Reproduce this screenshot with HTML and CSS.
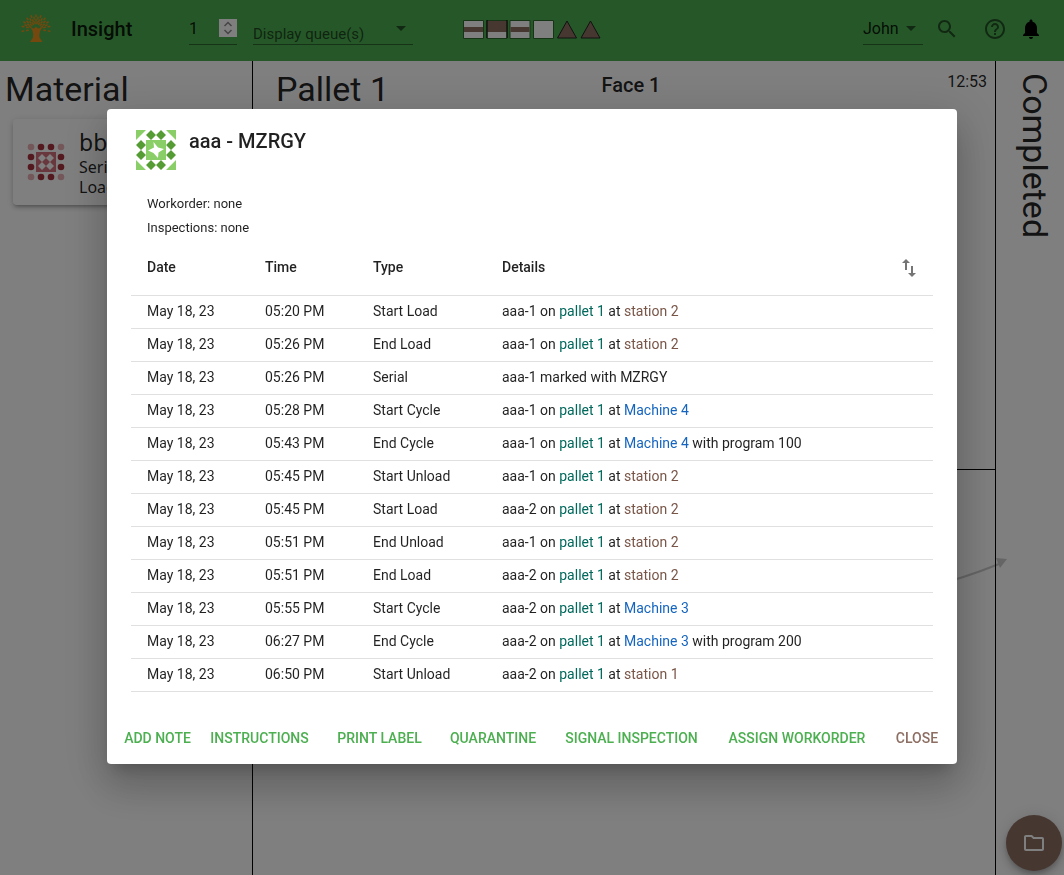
FILE: index.html
```html
<!DOCTYPE html>
<html lang="en">
<head>
<meta charset="utf-8">
<meta name="viewport" content="width=device-width, initial-scale=1">
<title>Insight</title>
<link rel="stylesheet" href="styles.css">
</head>
<body>
<div class="app">
  <header class="topbar">
    <svg class="logo" viewBox="0 0 30 30" aria-hidden="true">
      <defs>
        <path id="ray" d="M15 2v1.600M15 6.500v1.600"/>
        <path id="twig" d="M15 4.200v1.600M15 9v1.600"/>
      </defs>
      <g stroke="#e8901c" stroke-width="1.500" stroke-linecap="round" fill="none">
        <use href="#ray"/>
        <use href="#ray" transform="rotate(20 15 16)"/><use href="#ray" transform="rotate(-20 15 16)"/>
        <use href="#ray" transform="rotate(40 15 16)"/><use href="#ray" transform="rotate(-40 15 16)"/>
        <use href="#ray" transform="rotate(60 15 16)"/><use href="#ray" transform="rotate(-60 15 16)"/>
        <use href="#ray" transform="rotate(80 15 16)"/><use href="#ray" transform="rotate(-80 15 16)"/>
        <use href="#ray" transform="rotate(99 15 16)"/><use href="#ray" transform="rotate(-99 15 16)"/>
        <use href="#twig" transform="rotate(10 15 16)"/><use href="#twig" transform="rotate(-10 15 16)"/>
        <use href="#twig" transform="rotate(30 15 16)"/><use href="#twig" transform="rotate(-30 15 16)"/>
        <use href="#twig" transform="rotate(50 15 16)"/><use href="#twig" transform="rotate(-50 15 16)"/>
        <use href="#twig" transform="rotate(70 15 16)"/><use href="#twig" transform="rotate(-70 15 16)"/>
      </g>
      <path fill="#e8901c" d="M9.500 14.500L13 15.500L15 13.500L17 15.500L21.500 14.500Q17.500 19 18.500 24.500L21.500 29H9L12 24.500Q13 19 9.500 14.500Z"/>
    </svg>
    <h1 class="brand">Insight</h1>
    <div class="field station">
      <input class="station-input" type="number" value="1" min="1" aria-label="Station">
      <svg class="spinner" viewBox="0 0 18 18" aria-hidden="true"><path fill="#fff" d="M0 0h18v18H0z"/><path d="M5.500 7L9 3.500L12.500 7M5.500 11L9 14.500L12.500 11" fill="none" stroke="#8a8a8a" stroke-width="1.500"/></svg>
    </div>
    <div class="field queues">
      <select class="queue-select" aria-label="Display queues"><option>Display queue(s)</option></select>
      <svg class="caret" viewBox="0 0 10 5" aria-hidden="true"><path d="M0 0h10L5 5z"/></svg>
    </div>
    <svg class="signals" viewBox="0 0 138 20" aria-hidden="true">
      <g fill="#fff" stroke="#2a6b2d" stroke-width="1">
        <path d="M.5 1.500h20v18H.5zM24 1.500h20v18H24zM47 1.500h20v18H47zM70.500 1.500h20v18h-20z"/>
      </g>
      <path fill="#8d6e63" d="M1 8h19v5H1zM24 2h20v11H24zM47.500 8h19v5h-19z"/>
      <path d="M24 1v18M44 1v18" stroke="#000"/>
      <path fill="#8d6e63" stroke="#222" d="M104 2l9.500 17h-19zM127.500 2l9.500 17h-19z"/>
    </svg>
    <div class="field user">
      <select class="user-select" aria-label="Operator"><option>John</option></select>
      <svg class="caret" viewBox="0 0 10 5" aria-hidden="true"><path d="M0 0h10L5 5z"/></svg>
    </div>
    <div class="tools">
      <button class="icon-button" aria-label="Search"><svg viewBox="0 0 24 24"><path d="M15.500 14h-.79l-.28-.27C15.410 12.590 16 11.110 16 9.500 16 5.910 13.090 3 9.500 3S3 5.910 3 9.500 5.910 16 9.500 16c1.610 0 3.090-.59 4.230-1.570l.27.28v.79l5 4.990L20.490 19l-4.990-5zm-6 0C7.010 14 5 11.990 5 9.500S7.010 5 9.500 5 14 7.010 14 9.500 11.990 14 9.500 14z"/></svg></button>
      <button class="icon-button" aria-label="Help"><svg viewBox="0 0 24 24"><path d="M11 18h2v-2h-2v2zm1-16C6.480 2 2 6.480 2 12s4.480 10 10 10 10-4.480 10-10S17.520 2 12 2zm0 18c-4.410 0-8-3.590-8-8s3.590-8 8-8 8 3.590 8 8-3.590 8-8 8zm0-14c-2.210 0-4 1.790-4 4h2c0-1.100.9-2 2-2s2 .9 2 2c0 2-3 1.750-3 5h2c0-2.250 3-2.500 3-5 0-2.210-1.790-4-4-4z"/></svg></button>
      <button class="icon-button alert" aria-label="Notifications"><svg viewBox="0 0 24 24"><path d="M12 22c1.100 0 2-.9 2-2h-4c0 1.100.89 2 2 2zm6-6v-5c0-3.070-1.640-5.640-4.500-6.320V4c0-.83-.67-1.500-1.500-1.500s-1.500.67-1.500 1.500v.68C7.630 5.360 6 7.920 6 11v5l-2 2v1h16v-1l-2-2z"/></svg></button>
    </div>
  </header>

  <main class="board">
    <section class="material">
      <h2 class="heading">Material</h2>
      <article class="card">
        <svg class="identicon" viewBox="-5 -5 50 50" aria-hidden="true">
          <g fill="#e8aeb3"><circle cx="5" cy="5" r="3.300"/><circle cx="35" cy="5" r="3.300"/><circle cx="5" cy="35" r="3.300"/><circle cx="35" cy="35" r="3.300"/></g>
          <g fill="#a8323f"><circle cx="15" cy="5" r="3.300"/><circle cx="25" cy="5" r="3.300"/><circle cx="5" cy="15" r="3.300"/><circle cx="5" cy="25" r="3.300"/><circle cx="35" cy="15" r="3.300"/><circle cx="35" cy="25" r="3.300"/><circle cx="15" cy="35" r="3.300"/><circle cx="25" cy="35" r="3.300"/></g>
          <path fill="#d2707d" d="M10 10h20v20H10z"/>
          <path fill="#fff" d="M16 12l4 4-4 4-4-4zM24 12l4 4-4 4-4-4zM16 20l4 4-4 4-4-4zM24 20l4 4-4 4-4-4z"/>
        </svg>
        <div class="card-text">
          <h3 class="card-title">bbb</h3>
          <p class="card-line">Serial:</p>
          <p class="card-line">Load</p>
        </div>
      </article>
    </section>
    <section class="pallet">
      <div class="pallet-face">
        <h2 class="heading">Pallet 1</h2>
        <h3 class="face">Face 1</h3>
        <time class="clock">12:53</time>
      </div>
      <svg class="route" viewBox="0 0 150 60" aria-hidden="true"><path d="M0 46Q70 40 142 11" fill="none" stroke="#000" stroke-width="2"/><path d="M139 5l11 1-7 9z"/></svg>
    </section>
    <section class="completed"><h2 class="heading vertical">Completed</h2></section>
  </main>
  <button class="fab" aria-label="Open folder"><svg viewBox="0 0 24 24"><path d="M9.170 6l2 2H20v10H4V6h5.170M10 4H4c-1.100 0-1.990.9-1.990 2L2 18c0 1.100.9 2 2 2h16c1.100 0 2-.9 2-2V8c0-1.100-.9-2-2-2h-8l-2-2z"/></svg></button>
</div>

<div class="scrim">
  <div class="dialog" role="dialog" aria-modal="true" aria-labelledby="dialog-title">
    <div class="dialog-head">
      <svg class="identicon" viewBox="-5 -5 50 50" aria-hidden="true">
        <path fill="#8ace68" d="M0 0h10L0 10zM30 0h10v10zM40 30v10H30zM0 30l10 10H0zM10 10h20v20H10z"/>
        <path fill="#569c35" d="M15 0l5 5-5 5-5-5zM25 0l5 5-5 5-5-5zM5 10l5 5-5 5-5-5zM5 20l5 5-5 5-5-5zM35 10l5 5-5 5-5-5zM35 20l5 5-5 5-5-5zM15 30l5 5-5 5-5-5zM25 30l5 5-5 5-5-5z"/>
        <path fill="#fff" d="M17.500 12l4.500 5.500 6 1.500-5.500 3.500L22 28l-4.500-5L12 20.500l6-3z"/>
      </svg>
      <h2 class="dialog-title" id="dialog-title">aaa - MZRGY</h2>
    </div>
    <div class="dialog-body">
      <div class="facts">
        <p>Workorder: none</p>
        <p>Inspections: none</p>
      </div>
      <table class="log">
        <colgroup><col class="col-date"><col class="col-time"><col class="col-type"><col><col class="col-sort"></colgroup>
        <thead>
          <tr><th>Date</th><th>Time</th><th>Type</th><th>Details</th><th class="sort-cell"><button class="sort" aria-label="Change sort order"><svg viewBox="0 0 24 24"><path d="M9 3L5 6.990h3V14h2V6.990h3L9 3zm7 14.010V10h-2v7.010h-3L15 21l4-3.990h-3z"/></svg></button></th></tr>
        </thead>
        <tbody>
          <tr><td>May 18, 23</td><td>05:20 PM</td><td>Start Load</td><td colspan="2">aaa-1 on <span class="pal">pallet 1</span> at <span class="stn">station 2</span></td></tr>
          <tr><td>May 18, 23</td><td>05:26 PM</td><td>End Load</td><td colspan="2">aaa-1 on <span class="pal">pallet 1</span> at <span class="stn">station 2</span></td></tr>
          <tr><td>May 18, 23</td><td>05:26 PM</td><td>Serial</td><td colspan="2">aaa-1 marked with MZRGY</td></tr>
          <tr><td>May 18, 23</td><td>05:28 PM</td><td>Start Cycle</td><td colspan="2">aaa-1 on <span class="pal">pallet 1</span> at <span class="mach">Machine 4</span></td></tr>
          <tr><td>May 18, 23</td><td>05:43 PM</td><td>End Cycle</td><td colspan="2">aaa-1 on <span class="pal">pallet 1</span> at <span class="mach">Machine 4</span> with program 100</td></tr>
          <tr><td>May 18, 23</td><td>05:45 PM</td><td>Start Unload</td><td colspan="2">aaa-1 on <span class="pal">pallet 1</span> at <span class="stn">station 2</span></td></tr>
          <tr><td>May 18, 23</td><td>05:45 PM</td><td>Start Load</td><td colspan="2">aaa-2 on <span class="pal">pallet 1</span> at <span class="stn">station 2</span></td></tr>
          <tr><td>May 18, 23</td><td>05:51 PM</td><td>End Unload</td><td colspan="2">aaa-1 on <span class="pal">pallet 1</span> at <span class="stn">station 2</span></td></tr>
          <tr><td>May 18, 23</td><td>05:51 PM</td><td>End Load</td><td colspan="2">aaa-2 on <span class="pal">pallet 1</span> at <span class="stn">station 2</span></td></tr>
          <tr><td>May 18, 23</td><td>05:55 PM</td><td>Start Cycle</td><td colspan="2">aaa-2 on <span class="pal">pallet 1</span> at <span class="mach">Machine 3</span></td></tr>
          <tr><td>May 18, 23</td><td>06:27 PM</td><td>End Cycle</td><td colspan="2">aaa-2 on <span class="pal">pallet 1</span> at <span class="mach">Machine 3</span> with program 200</td></tr>
          <tr><td>May 18, 23</td><td>06:50 PM</td><td>Start Unload</td><td colspan="2">aaa-2 on <span class="pal">pallet 1</span> at <span class="stn">station 1</span></td></tr>
        </tbody>
      </table>
    </div>
    <div class="actions">
      <button class="action">Add Note</button>
      <button class="action">Instructions</button>
      <button class="action">Print Label</button>
      <button class="action">Quarantine</button>
      <button class="action">Signal Inspection</button>
      <button class="action">Assign Workorder</button>
      <button class="action close">Close</button>
    </div>
  </div>
</div>
</body>
</html>
```
FILE: styles.css
```css
* { box-sizing: border-box; }

body {
  margin: 0;
  font-family: Roboto, "Liberation Sans", sans-serif;
  color: rgba(0, 0, 0, 0.87);
  background: #fff;
}

h1, h2, h3, p { margin: 0; }
h2, h3 { font-weight: 400; }
svg { display: block; }

button {
  font: inherit;
  border: 0;
  padding: 0;
  background: none;
  cursor: pointer;
}

input, select {
  font: inherit;
  color: inherit;
  border: 0;
  padding: 0;
  margin: 0;
  background: none;
  outline: 0;
  appearance: none;
}

.app {
  display: flex;
  flex-direction: column;
  min-height: 100vh;
}

/* Top bar */
.topbar {
  display: flex;
  align-items: center;
  height: 61px;
  padding: 0 21px;
  background: #4caf50;
}
.logo { width: 30px; height: 30px; margin: 0 20px 6px 0; }
.brand {
  width: 118px;
  font-size: 20px;
  font-weight: 500;
  line-height: 32px;
  margin-bottom: 4px;
}
.field {
  display: flex;
  align-items: center;
  height: 32px;
  margin-bottom: 4px;
  border-bottom: 1px solid rgba(0, 0, 0, 0.42);
  font-size: 16px;
}
.caret { width: 10px; height: 5px; fill: rgba(0, 0, 0, 0.54); pointer-events: none; }
.station { width: 48px; }
.station-input { flex: 1; min-width: 0; appearance: textfield; }
.spinner { width: 18px; height: 18px; }
.queues { width: 160px; margin-left: 16px; padding-right: 7px; }
.queue-select { flex: 1; min-width: 0; padding-top: 12px; color: rgba(0, 0, 0, 0.6); font-size: 15px; }
.signals { width: 138px; height: 20px; margin: 0 auto 4px 50px; }
.user { width: 60px; padding-right: 7px; }
.user-select { flex: 1; min-width: 0; }
.tools { display: flex; gap: 12px; margin: 0 0 4px 12px; }
.icon-button svg { width: 24px; height: 24px; fill: rgba(0, 0, 0, 0.54); }
.icon-button:nth-child(2) { margin-left: 12px; }
.icon-button.alert svg { fill: #000; }

/* Board */
.board {
  flex: 1;
  display: grid;
  grid-template-columns: 252px 1fr 68px;
}
.heading { font-size: 34px; line-height: 42px; padding-top: 7px; }
.material { padding-left: 5px; }
.card {
  display: flex;
  gap: 8px;
  margin: 9px 12px 0 8px;
  padding: 8px;
  height: 86px;
  border-radius: 4px;
  box-shadow: 0 3px 3px -2px rgba(0, 0, 0, 0.2), 0 3px 4px rgba(0, 0, 0, 0.14), 0 1px 8px rgba(0, 0, 0, 0.12);
  font-family: "Noto Sans", sans-serif;
}
.identicon { flex: none; width: 50px; height: 50px; }
.card .identicon { margin-top: 10px; }
.card-title { font-size: 23px; line-height: 30px; }
.card-line { font-size: 16px; line-height: 20px; }
.pallet {
  position: relative;
  display: grid;
  grid-template-rows: 409px 1fr;
  border: solid #000;
  border-width: 0 1px;
}
.pallet-face {
  display: grid;
  grid-template-columns: 1fr 60px 1fr;
  align-items: start;
  padding: 0 8px 0 23px;
  border-bottom: 1px solid #000;
}
.face { font-size: 20px; font-weight: 500; line-height: 32px; padding-top: 8px; }
.clock { justify-self: end; font-size: 16px; line-height: 24px; padding-top: 9px; }
.route { position: absolute; right: -12px; top: 492px; width: 150px; height: 60px; opacity: 0.2; }
.vertical { writing-mode: vertical-rl; padding: 12px 0 0 18px; }

.fab {
  position: fixed;
  right: 2px;
  bottom: 4px;
  display: grid;
  place-items: center;
  width: 56px;
  height: 56px;
  border-radius: 50%;
  background: #8d6e63;
  box-shadow: 0 3px 5px -1px rgba(0, 0, 0, 0.2), 0 6px 10px rgba(0, 0, 0, 0.14), 0 1px 18px rgba(0, 0, 0, 0.12);
}
.fab svg { width: 24px; height: 24px; fill: #fff; }

/* Dialog */
.scrim {
  position: fixed;
  inset: 0;
  display: flex;
  align-items: center;
  justify-content: center;
  padding: 32px 32px 34px;
  background: rgba(0, 0, 0, 0.5);
}
.dialog {
  width: 100%;
  max-width: 850px;
  max-height: 100%;
  overflow-y: auto;
  border-radius: 4px;
  background: #fff;
  box-shadow: 0 11px 15px -7px rgba(0, 0, 0, 0.2), 0 24px 38px 3px rgba(0, 0, 0, 0.14), 0 9px 46px 8px rgba(0, 0, 0, 0.12);
}
.dialog-head { display: flex; gap: 8px; padding: 16px 24px; }
.dialog-title { font-size: 20px; font-weight: 500; line-height: 32px; }
.dialog-body { padding: 1px 24px 20px; }
.facts { padding: 0 16px; font-size: 13px; line-height: 24px; }
.log {
  width: 100%;
  table-layout: fixed;
  border-collapse: collapse;
  font-size: 14px;
  line-height: 20px;
}
.col-date { width: 118px; }
.col-time { width: 108px; }
.col-type { width: 129px; }
.col-sort { width: 64px; }
.log th, .log td {
  padding: 5px 16px 7px;
  text-align: left;
  border-bottom: 1px solid #e0e0e0;
}
.log th { height: 55px; font-weight: 500; }
.log .sort-cell { padding: 5px 12px; }
.sort { display: block; margin-left: auto; }
.sort svg { width: 24px; height: 24px; fill: rgba(0, 0, 0, 0.54); }
.pal { color: #00695c; }
.stn { color: #795548; }
.mach { color: #1565c0; }

.actions {
  display: grid;
  grid-template-columns: 85fr 119fr 121fr 106fr 171fr 160fr 80fr;
  padding: 8px 0 8px 8px;
}
.action {
  height: 36px;
  border-radius: 4px;
  font-size: 14px;
  font-weight: 500;
  text-transform: uppercase;
  white-space: nowrap;
  color: #4caf50;
}
.action.close { color: #8d6e63; }
```
